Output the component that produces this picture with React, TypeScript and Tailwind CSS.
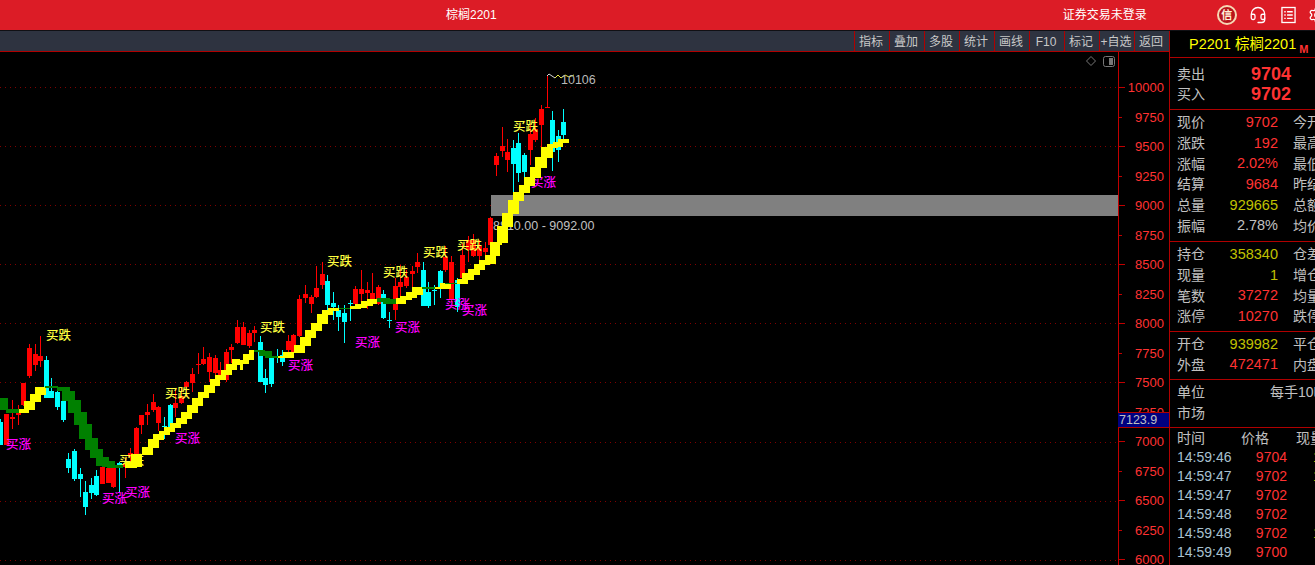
import { Headset, Settings } from 'lucide-react';

const UI_FONT = "font-['Liberation_Sans','Noto_Sans_CJK_SC',sans-serif]";

const RED = '#ff0000';
const CYAN = '#00ffff';
const YELLOW = '#ffff00';
const GREEN = '#008000';

// candles read off the picture at 3x: [x, bodyTop, bodyBottom, wickTop, wickBottom, colour]
type Candle = [number, number, number, number, number, string];
type Step = [number, number, number, number, string];

const toReal = (v: number, base: number) => base + v / 3;

const leftCandles: Candle[] = [
  [0, 305, 375, 297, 375, CYAN], [19, 282, 375, 282, 375, RED], [37, 290, 297, 240, 328, RED],
  [55, 280, 286, 255, 315, RED], [70, 190, 255, 188, 258, RED], [88, 84, 168, 72, 174, RED],
  [106, 102, 135, 72, 152, RED], [121, 108, 123, 48, 140, RED], [139, 120, 234, 108, 234, CYAN],
  [154, 213, 234, 175, 234, CYAN], [172, 216, 261, 210, 270, CYAN], [190, 243, 300, 240, 306, CYAN],
  [205, 417, 444, 400, 460, CYAN], [223, 393, 477, 387, 483, CYAN], [241, 462, 477, 445, 530, CYAN],
  [256, 516, 561, 484, 585, CYAN], [274, 495, 519, 474, 537, CYAN], [289, 468, 525, 450, 528, CYAN],
  [307, 441, 492, 438, 492, RED], [325, 444, 489, 430, 490, RED], [340, 444, 501, 430, 505, RED],
  [358, 430, 435, 425, 520, CYAN], [376, 430, 440, 415, 474, RED], [391, 400, 412, 384, 440, RED],
  [409, 324, 405, 320, 410, RED], [424, 285, 315, 285, 342, RED], [442, 276, 285, 252, 315, RED],
  [460, 246, 270, 222, 276, RED], [475, 261, 309, 258, 333, RED], [493, 318, 322, 291, 357, CYAN],
  [511, 255, 320, 252, 330, CYAN], [526, 249, 264, 210, 290, RED], [544, 228, 249, 200, 252, RED],
  [559, 186, 201, 182, 230, RED], [577, 162, 189, 144, 215, RED], [595, 132, 136, 99, 162, RED],
  [610, 117, 132, 81, 135, RED], [628, 111, 156, 99, 186, RED], [646, 114, 159, 105, 165, RED],
  [661, 150, 165, 125, 165, RED], [679, 96, 180, 88, 185, RED], [694, 81, 90, 72, 130, RED],
  [712, 21, 69, 0, 72, RED],
];

const midCandles: Candle[] = [
  [10, 291, 345, 276, 345, RED], [26, 309, 348, 300, 353, RED], [43, 300, 309, 288, 335, RED],
  [61, 336, 456, 318, 456, CYAN], [76, 444, 465, 417, 488, CYAN], [94, 384, 462, 375, 470, CYAN],
  [110, 380, 385, 357, 400, CYAN], [127, 375, 396, 360, 408, CYAN], [145, 333, 360, 315, 365, RED],
  [160, 315, 370, 312, 372, RED], [178, 207, 318, 195, 320, RED], [196, 192, 204, 165, 220, RED],
  [212, 201, 221, 195, 249, RED], [229, 174, 201, 108, 204, RED], [247, 132, 165, 96, 178, RED],
  [262, 153, 225, 135, 270, CYAN], [280, 219, 231, 186, 270, CYAN], [295, 240, 261, 225, 303, CYAN],
  [313, 249, 276, 225, 339, CYAN], [331, 218, 220, 210, 273, CYAN], [346, 177, 222, 168, 225, RED],
  [364, 177, 192, 120, 220, RED], [382, 180, 189, 156, 237, RED], [397, 189, 210, 129, 220, RED],
  [415, 171, 222, 165, 225, RED], [430, 192, 264, 180, 267, CYAN], [448, 270, 274, 246, 294, CYAN],
  [466, 168, 240, 145, 270, RED], [481, 156, 171, 105, 200, RED], [499, 141, 168, 120, 175, RED],
  [517, 123, 132, 108, 170, RED], [532, 96, 111, 70, 130, RED], [550, 120, 228, 96, 228, CYAN],
  [565, 186, 228, 156, 234, CYAN], [583, 180, 182, 165, 225, CYAN], [601, 123, 175, 120, 204, CYAN],
  [616, 81, 120, 48, 125, RED], [634, 96, 210, 78, 215, RED], [652, 150, 230, 145, 245, CYAN],
  [667, 75, 145, 40, 150, RED], [685, 30, 60, 18, 95, RED], [700, 30, 78, 12, 80, RED],
  [718, 48, 78, 30, 135, RED], [736, 54, 66, 36, 90, RED], [751, 0, 36, 0, 40, RED],
];

const topCandles: Candle[] = [
  [31, 460, 540, 455, 540, RED], [49, 273, 300, 264, 333, RED], [67, 243, 258, 186, 276, RED],
  [82, 261, 285, 222, 320, RED], [100, 249, 297, 225, 380, CYAN], [115, 234, 324, 205, 352, CYAN],
  [133, 270, 320, 265, 348, CYAN], [151, 207, 255, 180, 300, RED], [166, 192, 225, 160, 230, RED],
  [184, 132, 180, 120, 250, RED], [202, 125, 129, 30, 130, RED], [217, 165, 260, 138, 318, CYAN],
  [235, 213, 255, 195, 290, CYAN], [250, 171, 210, 132, 222, CYAN],
];

// the moving band: [x1, x2, top, bottom, colour]
const leftBand: Step[] = [
  [0, 24, 234, 270, GREEN], [18, 57, 267, 279, GREEN], [57, 87, 267, 279, YELLOW], [72, 105, 243, 270, YELLOW],
  [90, 123, 222, 246, YELLOW], [105, 138, 200, 225, YELLOW], [135, 175, 198, 204, GREEN], [172, 210, 201, 213, GREEN],
  [187, 225, 213, 243, GREEN], [205, 243, 240, 279, GREEN], [222, 261, 276, 315, GREEN], [237, 276, 312, 357, GREEN],
  [255, 294, 354, 390, GREEN], [270, 309, 387, 414, GREEN], [288, 327, 411, 438, GREEN], [306, 345, 423, 440, GREEN],
  [322, 370, 435, 443, GREEN], [375, 410, 425, 443, YELLOW], [393, 426, 402, 440, YELLOW], [426, 459, 381, 405, YELLOW],
  [444, 477, 357, 384, YELLOW], [459, 492, 342, 360, YELLOW], [477, 510, 333, 345, YELLOW], [492, 525, 321, 336, YELLOW],
  [510, 543, 309, 324, YELLOW], [528, 561, 294, 312, YELLOW], [543, 576, 276, 297, YELLOW], [561, 594, 255, 279, YELLOW],
  [576, 609, 234, 258, YELLOW], [594, 627, 216, 234, YELLOW], [612, 645, 195, 219, YELLOW], [630, 660, 177, 198, YELLOW],
  [645, 678, 165, 180, YELLOW], [663, 696, 150, 165, YELLOW], [678, 711, 132, 150, YELLOW], [696, 720, 117, 135, YELLOW],
];

const midBand: Step[] = [
  [0, 9, 390, 420, YELLOW], [9, 27, 372, 402, YELLOW], [27, 42, 360, 390, YELLOW], [42, 75, 360, 366, GREEN],
  [57, 96, 364, 378, GREEN], [75, 115, 378, 384, GREEN], [115, 130, 378, 384, YELLOW], [130, 162, 366, 384, YELLOW],
  [162, 195, 345, 369, YELLOW], [180, 213, 321, 348, YELLOW], [195, 228, 300, 324, YELLOW], [213, 246, 279, 303, YELLOW],
  [231, 264, 252, 282, YELLOW], [246, 280, 240, 255, YELLOW], [264, 297, 234, 243, YELLOW], [297, 330, 234, 237, GREEN],
  [330, 363, 228, 237, YELLOW], [345, 380, 222, 234, YELLOW], [363, 400, 213, 228, YELLOW], [380, 410, 207, 222, YELLOW],
  [410, 450, 204, 215, GREEN], [430, 468, 208, 222, GREEN], [468, 499, 204, 222, YELLOW], [481, 516, 198, 210, YELLOW],
  [499, 532, 186, 204, YELLOW], [516, 550, 171, 195, YELLOW], [545, 585, 171, 177, GREEN], [585, 600, 171, 177, YELLOW],
  [600, 633, 159, 177, YELLOW], [615, 655, 159, 162, GREEN], [652, 685, 147, 162, YELLOW], [667, 702, 129, 150, YELLOW],
  [685, 720, 117, 135, YELLOW], [702, 735, 102, 120, YELLOW], [717, 750, 90, 105, YELLOW], [735, 768, 75, 102, YELLOW],
  [751, 780, 36, 78, YELLOW],
];

const topBand: Step[] = [
  [33, 66, 530, 540, YELLOW], [50, 84, 483, 535, YELLOW], [66, 100, 444, 486, YELLOW], [84, 117, 405, 447, YELLOW],
  [100, 133, 381, 408, YELLOW], [117, 150, 360, 384, YELLOW], [133, 166, 336, 363, YELLOW], [150, 184, 306, 339, YELLOW],
  [166, 201, 276, 309, YELLOW], [184, 220, 246, 279, YELLOW], [201, 235, 237, 249, YELLOW], [220, 250, 231, 246, YELLOW],
  [235, 267, 222, 234, YELLOW],
];

const axisLabels = ['10000', '9750', '9500', '9250', '9000', '8750', '8500', '8250', '8000', '7750', '7500', '7250', '7000', '6750', '6500', '6250', '6000'];

const buyFall = [[46, 336], [165, 394], [119, 461], [260, 328], [327, 262], [383, 273], [423, 253], [457, 246], [513, 127]];
const buyRise = [[6, 445], [175, 439], [102, 499], [125, 493], [288, 366], [355, 343], [395, 328], [445, 305], [462, 311], [531, 183]];

const tools = ['指标', '叠加', '多股', '统计', '画线', 'F10', '标记', '+自选', '返回'];

const quoteBlocks = [
  [
    ['现价', '9702', 'r', '今开'], ['涨跌', '192', 'r', '最高'], ['涨幅', '2.02%', 'r', '最低'],
    ['结算', '9684', 'r', '昨结'], ['总量', '929665', 'y', '总额'], ['振幅', '2.78%', 'g', '均价'],
  ],
  [
    ['持仓', '358340', 'y', '仓差'], ['现量', '1', 'y', '增仓'], ['笔数', '37272', 'r', '均量'], ['涨停', '10270', 'r', '跌停'],
  ],
  [
    ['开仓', '939982', 'y', '平仓'], ['外盘', '472471', 'r', '内盘'],
  ],
];

const ticks = [
  ['14:59:46', '9704', '1'], ['14:59:47', '9702', '1'], ['14:59:47', '9702', ''],
  ['14:59:48', '9702', ''], ['14:59:48', '9702', '1'], ['14:59:49', '9700', ''],
];

function CandleSet({ data, bx, by }: { data: Candle[]; bx: number; by: number }) {
  return (
    <>
      {data.map(([x, top, bottom, hi, lo, color], i) => {
        const cx = Math.round(toReal(x, bx));
        const bodyH = Math.max(1, (bottom - top) / 3);
        return (
          <g key={i} fill={color} shapeRendering="crispEdges">
            <rect x={cx} y={toReal(hi, by)} width={1} height={(lo - hi) / 3} />
            <rect x={cx - 2} y={toReal(top, by)} width={5} height={bodyH} />
          </g>
        );
      })}
    </>
  );
}

function BandSet({ data, bx, by }: { data: Step[]; bx: number; by: number }) {
  return (
    <>
      {data.map(([x1, x2, top, bottom, color], i) => (
        <rect key={i} x={toReal(x1, bx)} y={toReal(top, by)} width={(x2 - x1) / 3} height={(bottom - top) / 3} fill={color} shapeRendering="crispEdges" />
      ))}
    </>
  );
}

function Chart() {
  return (
    <svg width={1169} height={513} viewBox="0 52 1169 513" className="block" fontFamily="'Noto Sans CJK SC', sans-serif">
      {[87, 146, 205, 264, 323, 382, 442, 501, 560].map((y) => (
        <line key={y} x1={0} x2={1118} y1={y + 0.5} y2={y + 0.5} stroke="#800000" strokeDasharray="1 4" shapeRendering="crispEdges" />
      ))}
      <CandleSet data={leftCandles} bx={0} by={320} />
      <CandleSet data={midCandles} bx={240} by={230} />
      <CandleSet data={topCandles} bx={480} by={65} />

      {buyFall.map(([x, y]) => (
        <text key={`${x}-${y}`} x={x} y={y + 4} fontSize={12.5} fontWeight={500} fill="#ffff40">买跌</text>
      ))}
      {buyRise.map(([x, y]) => (
        <text key={`${x}-${y}`} x={x} y={y + 4} fontSize={12.5} fontWeight={500} fill="#ff00ff">买涨</text>
      ))}

      <text x={493} y={230} fontSize={12.5} fill="#c0c0c0" fontFamily="'Liberation Sans', sans-serif">8810.00 - 9092.00</text>
      <rect x={491} y={195} width={627} height={21} fill="#808080" />

      <BandSet data={leftBand} bx={0} by={320} />
      <BandSet data={midBand} bx={240} by={230} />
      <BandSet data={topBand} bx={480} by={65} />

      <polyline points="547,76 549,74 552,76 555,78 558,75" fill="none" stroke="#d8d8d8" />
      <polyline points="555,78 558,75 561,78 565,75 569,77 574,75" fill="none" stroke="#e8e840" />
      <text x={561} y={84} fontSize={12.5} fill="#b8b8b8" fontFamily="'Liberation Sans', sans-serif">10106</text>

      <path d="M1086.5 61 L1091 56.5 L1095.5 61 L1091 65.5 Z" fill="none" stroke="#777" />
      <rect x={1103.5} y={56.5} width={11} height={10} rx={2} fill="none" stroke="#777" />
      <rect x={1109} y={58} width={4} height={7} fill="#777" />

      <rect x={1118} y={52} width={1} height={513} fill="#c00000" />
      {axisLabels.map((label, i) => {
        const y = 87 + i * 29.5;
        const major = i % 2 === 0;
        return (
          <g key={label}>
            <rect x={1119} y={Math.round(y)} width={major ? 6 : 3} height={1} fill="#c00000" />
            <text x={1164} y={y + 5} textAnchor="end" fontSize={13} fill="#ff3232" fontFamily="'Liberation Sans', sans-serif">{label}</text>
          </g>
        );
      })}
    </svg>
  );
}

function ValueColor({ kind, children }: { kind: string; children: string }) {
  const cls = kind === 'r' ? 'text-[#ff3232]' : kind === 'y' ? 'text-[#c0c000]' : 'text-[#c0c0c0]';
  return <span className={`w-[50px] shrink-0 text-right text-[14.5px] whitespace-nowrap ${cls}`}>{children}</span>;
}

function QuoteBlock({ rows, first }: { rows: string[][]; first: boolean }) {
  return (
    <div className={`flex shrink-0 flex-col border-b border-[#b00000] pt-[2px] ${first ? 'pb-[5px]' : 'pb-[4px]'}`}>
      {rows.map(([label, value, kind, other]) => (
        <div key={label} className="flex h-[20.67px] items-center pl-[7px] whitespace-nowrap">
          <span className="w-[51px] shrink-0 text-[#c0c0c0]">{label}</span>
          <ValueColor kind={kind}>{value}</ValueColor>
          <span className="ml-[15px] shrink-0 text-[#c0c0c0]">{other}</span>
        </div>
      ))}
    </div>
  );
}

function SidePanel() {
  return (
    <aside className="flex h-full w-[146px] shrink-0 flex-col overflow-hidden border-l border-[#b00000] bg-black text-[14px] leading-none">
      <div className="flex h-[27px] shrink-0 items-center border-b border-[#b00000] pl-[19px] whitespace-nowrap text-[14.5px] text-[#ffff00]">
        P2201 棕榈2201
        <span className="mt-[10px] ml-[3px] text-[11px] font-bold text-[#ff3232]">M</span>
      </div>
      <div className="flex h-[52px] shrink-0 flex-col border-b border-[#b00000] pt-[6px] pl-[7px]">
        {[['卖出', '9704'], ['买入', '9702']].map(([label, price]) => (
          <div key={label} className="flex h-[20px] items-center">
            <span className="w-[74px] shrink-0 text-[#c0c0c0]">{label}</span>
            <span className="text-[18px] font-bold text-[#ff3232]">{price}</span>
          </div>
        ))}
      </div>
      {quoteBlocks.map((rows, i) => (
        <QuoteBlock key={i} rows={rows} first={i === 0} />
      ))}
      <div className="flex h-[48px] shrink-0 flex-col border-b border-[#b00000] pt-[2px] pl-[7px]">
        <div className="flex h-[21px] items-center whitespace-nowrap">
          <span className="w-[93px] shrink-0 text-[#c0c0c0]">单位</span>
          <span className="shrink-0 text-[#c0c0c0]">每手10吨</span>
        </div>
        <div className="flex h-[21px] items-center text-[#c0c0c0]">市场</div>
      </div>
      <div className="flex h-[20px] shrink-0 items-center pl-[7px] whitespace-nowrap text-[#c0c0c0]">
        <span className="w-[64px] shrink-0">时间</span>
        <span className="w-[55px] shrink-0">价格</span>
        <span className="shrink-0">现量</span>
      </div>
      {ticks.map(([time, price, vol], i) => (
        <div key={i} className="flex h-[19px] shrink-0 items-center pl-[7px] whitespace-nowrap">
          <span className="w-[78px] shrink-0 text-[#a8c0d0]">{time}</span>
          <span className="w-[32px] shrink-0 text-right text-[#ff3232]">{price}</span>
          <span className="ml-[26px] shrink-0 text-[#c0c000]">{vol}</span>
        </div>
      ))}
    </aside>
  );
}

export default function App() {
  return (
    <div className={`flex h-[565px] w-[1315px] flex-col overflow-hidden bg-black ${UI_FONT}`}>
      <header className="flex h-[30px] shrink-0 items-center bg-[#dc1c26] text-[12px] whitespace-nowrap text-white">
        <span className="ml-[446px] shrink-0">棕榈2201</span>
        <span className="ml-[566px] shrink-0">证券交易未登录</span>
        <div className="ml-[70px] flex h-[20px] w-[20px] shrink-0 items-center justify-center rounded-full border-2 border-[#f6d8b4] bg-[#b8141c] text-[11px] font-bold text-[#fff0d8]">信</div>
        <Headset className="ml-[12px] h-[18px] w-[18px] shrink-0" strokeWidth={1.7} />
        <svg viewBox="0 0 16 18" className="ml-[14px] h-[18px] w-[15px] shrink-0" fill="none" stroke="white" strokeWidth={1.4}>
          <rect x="1" y="1" width="14" height="16" />
          <path d="M3.5 5.5h1.5M6.5 5.5h6M3.5 9h1.5M6.5 9h6M3.5 12.5h1.5M6.5 12.5h6" />
        </svg>
        <Settings className="ml-[12px] h-[18px] w-[18px] shrink-0" strokeWidth={1.7} />
      </header>
      <div className="h-px shrink-0 bg-[#101014]" />
      <div className="flex min-h-0 flex-1">
        <main className="flex w-[1169px] shrink-0 flex-col">
          <div className="flex h-[21px] shrink-0 items-center justify-end border-b border-[#b00000] bg-[#2e3340] text-[12px] text-[#c8c8c8]">
            {tools.map((t) => (
              <span key={t} className="flex h-full w-[35px] items-center justify-center border-l border-[#b00000] pt-[2px] pr-[2px] whitespace-nowrap">{t}</span>
            ))}
          </div>
          <div className="relative">
            <Chart />
            <div className="absolute top-[360px] left-[1118px] flex h-[16px] w-[51px] items-center border-y border-[#b00000] bg-[#000080] pl-[1px] text-[12.5px] text-[#c0c0c0]">7123.9</div>
          </div>
        </main>
        <SidePanel />
      </div>
    </div>
  );
}
